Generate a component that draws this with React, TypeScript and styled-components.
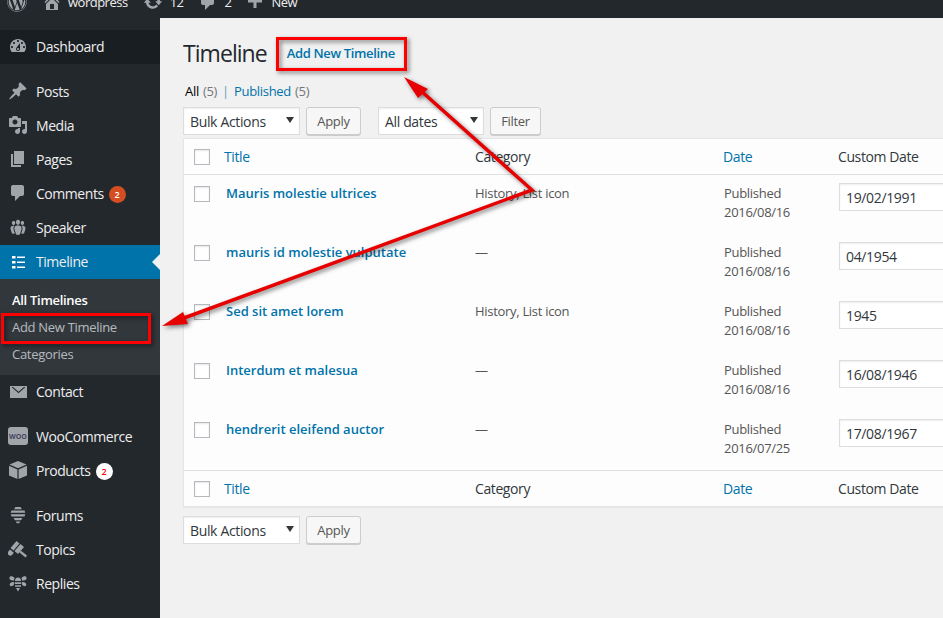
import React from "react";
import styled, { createGlobalStyle } from "styled-components";
import { FaWordpress } from "react-icons/fa";

const GlobalStyle = createGlobalStyle`
  html, body { margin: 0; padding: 0; background: #f1f1f1; overflow: hidden; }
  * { box-sizing: border-box; }
  body { font-family: "Open Sans", "Liberation Sans", sans-serif; font-size: 13px; letter-spacing: -0.3px; color: #444; }
`;

const paths = {
  home: "M16 8.5l1.53 1.53-1.06 1.06L10 4.62l-6.47 6.47-1.06-1.06L10 2.5l4 4v-2h2v4zm-6-2.46l6 5.99V18H4v-5.97zM12 17v-5H8v5h4z",
  update: "M10.2 3.28c3.53 0 6.43 2.61 6.92 6h2.08l-3.5 4-3.5-4h2.32c-.45-1.97-2.21-3.45-4.32-3.45-1.45 0-2.73.71-3.54 1.78L4.95 5.66C6.23 4.2 8.11 3.28 10.2 3.28zm-.4 13.44c-3.52 0-6.43-2.61-6.92-6H.8l3.5-4c1.17 1.33 2.33 2.67 3.5 4H5.48c.45 1.97 2.21 3.45 4.32 3.45 1.45 0 2.73-.71 3.54-1.78l1.71 1.95c-1.28 1.46-3.15 2.38-5.25 2.38z",
  comment: "M5 2h9c1.1 0 2 .9 2 2v7c0 1.1-.9 2-2 2h-2l-5 5v-5H5c-1.1 0-2-.9-2-2V4c0-1.1.9-2 2-2z",
  plus: "M17 7.5v3h-5.5V16h-3v-5.5H3v-3h5.5V2h3v5.5z",
  dashboard: "M3.76 16h12.48c1.1-1.37 1.76-3.11 1.76-5 0-4.42-3.58-8-8-8s-8 3.58-8 8c0 1.89.66 3.63 1.76 5zM10 4c.55 0 1 .45 1 1s-.45 1-1 1-1-.45-1-1 .45-1 1-1zM6 6c.55 0 1 .45 1 1s-.45 1-1 1-1-.45-1-1 .45-1 1-1zm8 0c.55 0 1 .45 1 1s-.45 1-1 1-1-.45-1-1 .45-1 1-1zm-5.37 5.55L12 7v6c0 1.1-.9 2-2 2s-2-.9-2-2c0-.57.24-1.08.63-1.45zM4 10c.55 0 1 .45 1 1s-.45 1-1 1-1-.45-1-1 .45-1 1-1zm12 0c.55 0 1 .45 1 1s-.45 1-1 1-1-.45-1-1 .45-1 1-1zm-5 3c0-.55-.45-1-1-1s-1 .45-1 1 .45 1 1 1 1-.45 1-1z",
  post: "M10.44 3.02l1.82-1.82 6.36 6.35-1.83 1.82c-1.05-.68-2.48-.57-3.41.36l-.75.75c-.92.93-1.04 2.35-.35 3.41l-1.83 1.82-2.41-2.41-2.8 2.79c-.42.42-3.38 2.71-3.8 2.29s1.86-3.39 2.28-3.81l2.79-2.79L4.1 9.36l1.83-1.82c1.05.69 2.48.57 3.4-.36l.75-.75c.93-.92 1.05-2.35.36-3.41z",
  media: "M13 11V4c0-.55-.45-1-1-1h-1.67L9 1H5L3.67 3H2c-.55 0-1 .45-1 1v7c0 .55.45 1 1 1h10c.55 0 1-.45 1-1zM7 4.5c1.38 0 2.5 1.12 2.5 2.5S8.38 9.5 7 9.5 4.5 8.38 4.5 7 5.62 4.5 7 4.5zM14 6h5v10.5c0 1.38-1.12 2.5-2.5 2.5S14 17.88 14 16.5s1.12-2.5 2.5-2.5c.17 0 .34.02.5.05V9h-3V6zm-4 8.05V13h2v3.5c0 1.38-1.12 2.5-2.5 2.5S7 17.88 7 16.5 8.12 14 9.5 14c.17 0 .34.02.5.05z",
  page: "M6 15V2h10v13H6zm-1 1h8v2H3V5h2v11z",
  groups: "M8.03 4.46c-.29 1.28.55 3.46 1.97 3.46 1.41 0 2.25-2.18 1.96-3.46-.22-.98-1.08-1.63-1.96-1.63-.89 0-1.74.65-1.97 1.63zm-4.13.9c-.25 1.08.47 2.93 1.67 2.93s1.92-1.85 1.67-2.93c-.19-.83-.92-1.39-1.67-1.39s-1.48.56-1.67 1.39zm8.86 0c-.25 1.08.47 2.93 1.66 2.93 1.2 0 1.92-1.85 1.67-2.93-.19-.83-.92-1.39-1.67-1.39-.74 0-1.47.56-1.66 1.39zm-.59 11.43l1.25-4.3C14.2 10 12.71 8.47 10 8.47c-2.72 0-4.21 1.53-3.44 4.02l1.26 4.3C8.05 17.51 9 18 10 18c.98 0 1.94-.49 2.17-1.21zm-6.1-7.63c-.49.67-.96 1.83-.42 3.59l1.12 3.79c-.34.2-.77.31-1.2.31-.85 0-1.65-.41-1.85-1.03l-1.07-3.65c-.65-2.11.61-3.4 2.92-3.4.27 0 .54.02.79.06-.1.1-.2.22-.29.33zm8.35-.39c2.31 0 3.58 1.29 2.92 3.4l-1.07 3.65c-.2.62-1 1.03-1.85 1.03-.43 0-.86-.11-1.2-.31l1.11-3.77c.55-1.78.08-2.94-.42-3.61-.08-.11-.18-.23-.28-.33.25-.04.51-.06.79-.06z",
  list: "M4 5h3.500v2.500H4zM9 5.500h8V7H9zM4 10h3.500v2.500H4zM9 10.500h8V12H9zM4 15h3.500v2.500H4zM9 15.500h8V17H9z",
  mail: "M2 5h17v12H2zM3.500 6L10.500 12.300 17.500 6H16L10.500 10.800 5 6z",
  box: "M10 1l8.500 3.600L10 8.200 1.500 4.600zM1 5.800l8.400 3.600V19L1 15.400zM19 5.800V15.400l-8.400 3.600V9.400z",
  hive: "M7.500 2h5l1.500 2.200H6zM3.500 5.500h13l.8 2.300H2.700zM2.700 9.200h14.600l-.8 2.300h-13zM5.500 12.900h9L13 15.200H7zM7.800 16.500h4.400l-1 1.800H8.800z",
  hammer: "M8.500 2l3 2.500-6 7-3-2.500zM12.500 5l3.500 3-6 7-3.500-3zM2 10.500l3.800 3.200-1.800 2.300a2.500 2.500 0 0 1-3.800-3.200zM11.500 13.500l1.500-1.800 6 4.800-1.500 2z",
  bee: "M10 4.500c2 0 3 1.500 3 3.500H7c0-2 1-3.500 3-3.500zM6.700 9.200h6.600v1.800H6.700zM7 12.200h6v1.600H7zM8 15h4l-2 3.500zM6 7.500C3 8 1 6.500 1.500 4.500 2 2.500 5 3 6.500 5zM14 7.500c3 .5 5-1 4.500-3C18 2.500 15 3 13.500 5zM5.800 9C3 9 1.200 10.500 1.800 12.300 2.500 14 5 13.200 6 11.500zM14.200 9c2.800 0 4.600 1.500 4 3.300-.7 1.700-3.200.9-4.200-.8z",
};

const Icon = styled.svg.attrs({ viewBox: "0 0 20 20" })<{ $white?: boolean }>`
  width: 20px;
  height: 20px;
  fill: ${(p) => (p.$white ? "#fff" : "#a0a5aa")};
  flex: none;
`;

const Page = styled.div`
  width: 943px;
  height: 618px;
  overflow: hidden;
  position: relative;
  display: flex;
  flex-direction: column;
`;

const AdminBar = styled.header`
  height: 18px;
  flex: none;
  overflow: hidden;
  background: #23282d;
`;

const BarInner = styled.div`
  height: 32px;
  margin-top: -14px;
  display: flex;
  align-items: center;
  padding-left: 7px;
  color: #eee;
  font-size: 13px;
  letter-spacing: -0.5px;
`;

const BarIcon = styled(Icon)<{ $left: number }>`
  margin-left: ${(p) => p.$left}px;
`;

const BarLabel = styled.span<{ $left: number }>`
  margin-left: ${(p) => p.$left}px;
`;

const WpLogo = styled(FaWordpress)`
  width: 20px;
  height: 20px;
  color: #a0a5aa;
  flex: none;
`;

const Body = styled.div`
  flex: 1;
  display: flex;
  min-height: 0;
`;

const Sidebar = styled.nav`
  width: 160px;
  flex: none;
  background: #23282d;
  padding-top: 12px;
`;

const Group = styled.div`
  margin-bottom: 11px;
`;

const MenuRow = styled.a<{ $state?: "active" | "hover" }>`
  height: 34px;
  padding-bottom: 2px;
  display: flex;
  align-items: center;
  position: relative;
  color: #eee;
  font-size: 14px;
  letter-spacing: -0.45px;
  background: ${(p) =>
    p.$state === "active" ? "#0073aa" : p.$state === "hover" ? "#191e23" : "transparent"};

  &::after {
    content: "";
    display: ${(p) => (p.$state === "active" ? "block" : "none")};
    position: absolute;
    right: 0;
    top: 9px;
    border: 8px solid transparent;
    border-right-color: #f1f1f1;
    border-left-width: 0;
  }
`;

const IconSlot = styled.span`
  width: 36px;
  flex: none;
  display: flex;
  justify-content: center;
`;

const Count = styled.span<{ $light?: boolean }>`
  width: 17px;
  height: 17px;
  margin: 2px 0 0 5px;
  border-radius: 50%;
  display: inline-flex;
  align-items: center;
  justify-content: center;
  font-size: 9px;
  font-weight: 600;
  letter-spacing: 0;
  background: ${(p) => (p.$light ? "#fff" : "#d54e21")};
  color: ${(p) => (p.$light ? "#f00" : "#fff")};
`;

const WooMark = styled.span`
  width: 20px;
  height: 18px;
  border-radius: 3px;
  background: #a0a5aa;
  color: #4a4560;
  font-size: 7px;
  font-weight: 700;
  letter-spacing: 0;
  display: flex;
  align-items: center;
  justify-content: center;
`;

const Submenu = styled.div`
  background: #32373c;
  padding: 7px 0 8px;
`;

const SubItem = styled.a<{ $current?: boolean }>`
  height: 27px;
  display: flex;
  align-items: center;
  padding-left: 12px;
  font-size: 13px;
  color: ${(p) => (p.$current ? "#fff" : "rgba(240,245,250,.7)")};
  font-weight: ${(p) => (p.$current ? 600 : 400)};
`;

const Content = styled.main`
  flex: 1;
  min-width: 0;
  padding-left: 23px;
  display: flex;
  flex-direction: column;
`;

const Heading = styled.div`
  height: 39px;
  margin-top: 15px;
  display: flex;
  align-items: center;
`;

const Title = styled.h1`
  margin: 0;
  font-size: 23px;
  font-weight: 400;
  letter-spacing: -0.95px;
  color: #23282d;
`;

const AddNew = styled.a`
  margin-left: 20px;
  font-size: 13px;
  font-weight: 600;
  letter-spacing: -0.35px;
  color: #0073aa;
`;

const Views = styled.div`
  margin-top: 9px;
  padding-left: 2px;
  height: 20px;
  display: flex;
  align-items: center;
  gap: 4px;
  color: #72777c;
`;

const ViewLink = styled.a<{ $current?: boolean }>`
  color: ${(p) => (p.$current ? "#000" : "#0073aa")};
`;

const Separator = styled.span`
  color: #6a9ab5;
  margin: 0 1px;
`;

const Actions = styled.div<{ $top: number }>`
  display: flex;
  margin-top: ${(p) => p.$top}px;
  height: 28px;
`;

const Select = styled.div<{ $w: number }>`
  width: ${(p) => p.$w}px;
  margin-right: 6px;
  height: 28px;
  background: #fff;
  border: 1px solid #ddd;
  box-shadow: inset 0 1px 2px rgba(0, 0, 0, 0.07);
  padding-left: 6px;
  font-size: 14px;
  letter-spacing: -0.35px;
  color: #32373c;
  display: flex;
  align-items: center;
  position: relative;

  &::after {
    content: "";
    position: absolute;
    right: 5px;
    top: 9px;
    border: 4px solid transparent;
    border-top: 6px solid #32373c;
    border-bottom-width: 0;
  }
`;

const Button = styled.button<{ $w: number; $after?: number }>`
  width: ${(p) => p.$w}px;
  margin-right: ${(p) => p.$after ?? 0}px;
  height: 28px;
  padding: 0;
  background: #f7f7f7;
  border: 1px solid #ccc;
  border-radius: 3px;
  box-shadow: 0 1px 0 #ccc;
  font-family: inherit;
  font-size: 13px;
  letter-spacing: -0.3px;
  color: #555;
`;

const Table = styled.section`
  width: 800px;
  margin-top: 3px;
  background: #fdfdfd;
  border: 1px solid #e5e5e5;
  box-shadow: 0 1px 1px rgba(0, 0, 0, 0.04);
`;

const Cols = styled.div`
  display: grid;
  grid-template-columns: 40px 251px 248px 115px 1fr;
`;

const HeadRow = styled(Cols)<{ $foot?: boolean }>`
  height: 36px;
  align-items: center;
  font-size: 14px;
  letter-spacing: -0.4px;
  border-${(p) => (p.$foot ? "top" : "bottom")}: 1px solid #e1e1e1;
`;

const Row = styled(Cols)`
  height: 59px;
  padding-top: 8px;
  align-items: start;
  font-size: 13px;
`;

const Check = styled.input.attrs({ type: "checkbox" })`
  appearance: none;
  width: 16px;
  height: 16px;
  margin: 0 0 0 10px;
  background: #fff;
  border: 1px solid #b4b9be;
  box-shadow: inset 0 1px 2px rgba(0, 0, 0, 0.1);
`;

const RowCheck = styled(Check)`
  margin-top: 3px;
`;

const SortLink = styled.a`
  color: #0073aa;
`;

const Plain = styled.span`
  color: #32373c;
`;

const RowTitle = styled.a`
  padding-left: 2px;
  padding-top: 1px;
  font-size: 13px;
  font-weight: 600;
  letter-spacing: 0;
  line-height: 19px;
  color: #0073aa;
`;

const Cell = styled.div`
  padding-top: 1px;
  line-height: 19px;
  color: #555;
`;

const DateCell = styled.div`
  padding: 1px 0 0 1px;
  line-height: 19px;
  color: #555;
`;

const DateInput = styled.input`
  width: 160px;
  height: 28px;
  margin-left: 1px;
  padding: 0 6px;
  border: 1px solid #ddd;
  background: #fff;
  box-shadow: inset 0 1px 2px rgba(0, 0, 0, 0.07);
  font-family: inherit;
  font-size: 14px;
  letter-spacing: -0.35px;
  color: #32373c;
`;

const Annotations = styled.svg`
  position: absolute;
  left: 0;
  top: 0;
  width: 943px;
  height: 618px;
  pointer-events: none;
  filter: drop-shadow(2px 2px 2px rgba(0, 0, 0, 0.5));
`;

type NavItem = { icon?: keyof typeof paths; label: string; count?: string; light?: boolean; woo?: boolean };

const beforeTimeline: NavItem[] = [
  { icon: "post", label: "Posts" },
  { icon: "media", label: "Media" },
  { icon: "page", label: "Pages" },
  { icon: "comment", label: "Comments", count: "2" },
  { icon: "groups", label: "Speaker" },
];

const afterTimeline: NavItem[][] = [
  [{ icon: "mail", label: "Contact" }],
  [
    { woo: true, label: "WooCommerce" },
    { icon: "box", label: "Products", count: "2", light: true },
  ],
  [
    { icon: "hive", label: "Forums" },
    { icon: "hammer", label: "Topics" },
    { icon: "bee", label: "Replies" },
  ],
];

const rows = [
  { title: "Mauris molestie ultrices", cat: "History, List icon", date: "2016/08/16", custom: "19/02/1991" },
  { title: "mauris id molestie vulputate", cat: "—", date: "2016/08/16", custom: "04/1954" },
  { title: "Sed sit amet lorem", cat: "History, List icon", date: "2016/08/16", custom: "1945" },
  { title: "Interdum et malesua", cat: "—", date: "2016/08/16", custom: "16/08/1946" },
  { title: "hendrerit eleifend auctor", cat: "—", date: "2016/07/25", custom: "17/08/1967" },
];

function MenuItem({ item }: { item: NavItem }) {
  return (
    <MenuRow>
      <IconSlot>
        {item.woo ? (
          <WooMark>WOO</WooMark>
        ) : (
          <Icon>
            <path d={paths[item.icon!]} />
          </Icon>
        )}
      </IconSlot>
      {item.label}
      {item.count && <Count $light={item.light}>{item.count}</Count>}
    </MenuRow>
  );
}

function HeaderCells({ foot }: { foot?: boolean }) {
  return (
    <HeadRow $foot={foot}>
      <Check />
      <SortLink>Title</SortLink>
      <Plain>Category</Plain>
      <SortLink>Date</SortLink>
      <Plain>Custom Date</Plain>
    </HeadRow>
  );
}

export default function App() {
  return (
    <Page>
      <GlobalStyle />
      <AdminBar>
        <BarInner>
          <WpLogo />
          <BarIcon $left={15}>
            <path d={paths.home} />
          </BarIcon>
          <BarLabel $left={6}>wordpress</BarLabel>
          <BarIcon $left={15}>
            <path d={paths.update} />
          </BarIcon>
          <BarLabel $left={7}>12</BarLabel>
          <BarIcon $left={14}>
            <path d={paths.comment} />
          </BarIcon>
          <BarLabel $left={7}>2</BarLabel>
          <BarIcon $left={14}>
            <path d={paths.plus} />
          </BarIcon>
          <BarLabel $left={6}>New</BarLabel>
        </BarInner>
      </AdminBar>
      <Body>
        <Sidebar>
          <Group>
            <MenuRow $state="hover">
              <IconSlot>
                <Icon>
                  <path d={paths.dashboard} />
                </Icon>
              </IconSlot>
              Dashboard
            </MenuRow>
          </Group>
          {beforeTimeline.map((item) => (
            <MenuItem key={item.label} item={item} />
          ))}
          <MenuRow $state="active">
            <IconSlot>
              <Icon $white>
                <path d={paths.list} />
              </Icon>
            </IconSlot>
            Timeline
          </MenuRow>
          <Submenu>
            <SubItem $current>All Timelines</SubItem>
            <SubItem>Add New Timeline</SubItem>
            <SubItem>Categories</SubItem>
          </Submenu>
          {afterTimeline.map((group, i) => (
            <Group key={i}>
              {group.map((item) => (
                <MenuItem key={item.label} item={item} />
              ))}
            </Group>
          ))}
        </Sidebar>
        <Content>
          <Heading>
            <Title>Timeline</Title>
            <AddNew>Add New Timeline</AddNew>
          </Heading>
          <Views>
            <ViewLink $current>All</ViewLink> (5)
            <Separator>|</Separator>
            <ViewLink>Published</ViewLink> (5)
          </Views>
          <Actions $top={6}>
            <Select $w={117}>Bulk Actions</Select>
            <Button $w={55} $after={17}>Apply</Button>
            <Select $w={106}>All dates</Select>
            <Button $w={51}>Filter</Button>
          </Actions>
          <Table>
            <HeaderCells />
            {rows.map((row) => (
              <Row key={row.title}>
                <RowCheck />
                <RowTitle>{row.title}</RowTitle>
                <Cell>{row.cat}</Cell>
                <DateCell>
                  Published
                  <br />
                  {row.date}
                </DateCell>
                <DateInput defaultValue={row.custom} />
              </Row>
            ))}
            <HeaderCells foot />
          </Table>
          <Actions $top={9}>
            <Select $w={117}>Bulk Actions</Select>
            <Button $w={55}>Apply</Button>
          </Actions>
        </Content>
      </Body>
      <Annotations viewBox="0 0 943 618">
        <rect x="277.500" y="38.500" width="128" height="31" fill="none" stroke="#f00" strokeWidth="3" />
        <rect x="2.500" y="314.500" width="147" height="28" fill="none" stroke="#f00" strokeWidth="3" />
        <polyline points="420,90 532,190 184,318" fill="none" stroke="#e60000" strokeWidth="3.500" />
        <polygon points="404,77 428,89 418,98" fill="#e60000" />
        <polygon points="162,326 183,312 188,324" fill="#e60000" />
      </Annotations>
    </Page>
  );
}
